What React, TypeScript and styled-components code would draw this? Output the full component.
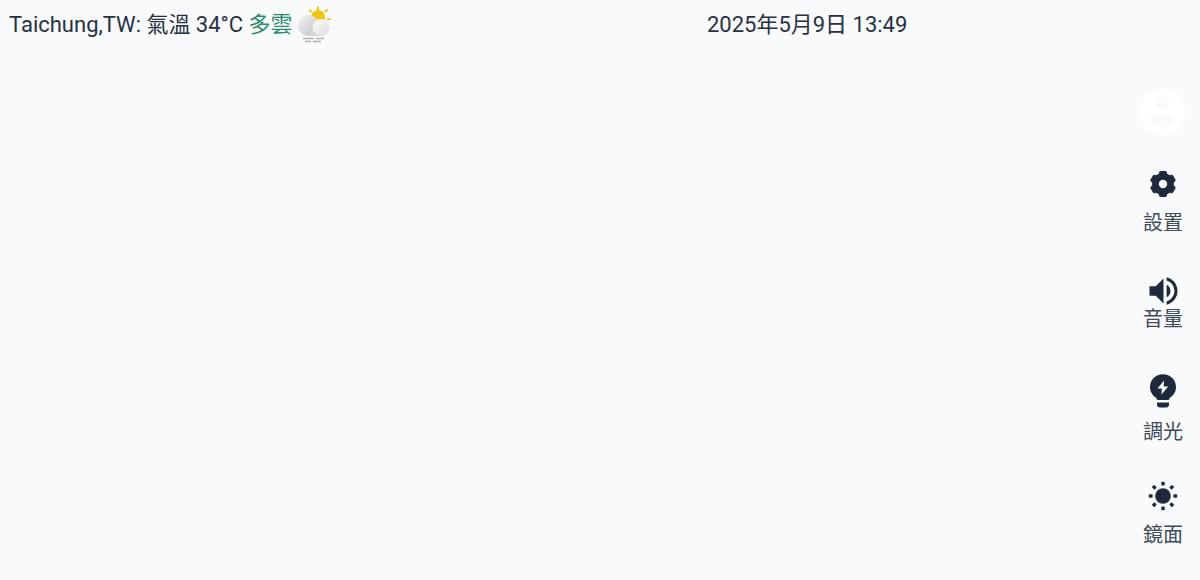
import React from "react";
import styled, { createGlobalStyle } from "styled-components";

const ink = "#1e293b";
const paper = "#f9fafc";

const GlobalStyle = createGlobalStyle`
  *, *::before, *::after { box-sizing: border-box; }
  body {
    margin: 0;
    background: ${paper};
    color: #273142;
    font-family: Roboto, "Noto Sans CJK TC", sans-serif;
    font-weight: 400;
  }
`;

const Page = styled.div`
  display: flex;
  flex-direction: column;
  min-height: 100vh;
`;

const TopBar = styled.header`
  display: grid;
  grid-template-columns: 586fr 414fr;
  align-items: center;
  height: 48px;
  padding: 2px 0 0 9px;
  font-size: 22px;
  line-height: 32px;
  white-space: nowrap;
`;

const Weather = styled.div`
  display: flex;
  align-items: center;
  gap: 2px;
`;

const Condition = styled.span`
  color: #2b8a6c;
`;

const Content = styled.div`
  display: flex;
  flex: 1;
`;

const Main = styled.main`
  flex: 1;
`;

const Sidebar = styled.nav`
  display: flex;
  flex-direction: column;
  align-items: center;
  width: 74px;
  padding-top: 40px;
`;

const IconButton = styled.button<{ $gap?: number; $top?: number }>`
  display: flex;
  flex-direction: column;
  align-items: center;
  gap: ${({ $gap = 12 }) => $gap}px;
  margin-top: ${({ $top = 0 }) => $top}px;
  padding: 0;
  border: 0;
  background: none;
  color: #414b59;
  font: inherit;
  font-size: 20px;
  line-height: 24px;
  cursor: pointer;

  svg {
    display: block;
    fill: ${ink};
  }
`;

const WeatherIcon = () => (
  <svg width="36" height="40" viewBox="0 0 36 40" aria-hidden="true">
    <defs>
      <linearGradient id="cloudBack" x1="0" y1="0" x2="1" y2="1">
        <stop offset="0.1" stopColor="#eeeeef" />
        <stop offset="0.9" stopColor="#c6c7c9" />
      </linearGradient>
      <linearGradient id="cloudFront" x1="0" y1="0" x2="1" y2="1">
        <stop offset="0.1" stopColor="#f8f8f8" />
        <stop offset="1" stopColor="#dcdddf" />
      </linearGradient>
    </defs>
    <path
      d="M23 2v2.500M14.500 5.500l1.500 1.300M32 5l-1.700 1.700M35 14.300h-2.500"
      fill="none"
      stroke="#efc62c"
      strokeWidth="2"
      strokeLinecap="round"
    />
    <circle cx="23" cy="12" r="7" fill="#efc40f" />
    <circle cx="13.500" cy="20.500" r="10.500" fill="url(#cloudBack)" />
    <path d="M13.500 21h13v10h-13z" fill="#d2d3d5" />
    <circle cx="26" cy="22.500" r="8.400" fill="url(#cloudFront)" />
    <g strokeWidth="1.500">
      <path d="M8 33.500h11" stroke="#aab5bd" />
      <path d="M21 33.500h8M10 36.500h6M18 36.500h8" stroke="#b0b1b3" />
    </g>
  </svg>
);

const AvatarIcon = () => (
  <svg width="48" height="48" viewBox="0 0 48 48" aria-hidden="true">
    <circle cx="23" cy="24" r="23" style={{ fill: "#fff" }} />
    <circle cx="23" cy="14.500" r="7" style={{ fill: paper }} />
    <path d="M9 32c5-8 23-8 28 0-6 10-22 10-28 0z" style={{ fill: paper }} />
  </svg>
);

const GearIcon = () => (
  <svg width="26" height="26" viewBox="-13 -13 26 26" aria-hidden="true">
    <circle r="10.900" />
    {[0, 60, 120].map((angle) => (
      <rect key={angle} x="-4" y="-13" width="8" height="26" rx="2" transform={`rotate(${angle})`} />
    ))}
    <circle r="4.200" style={{ fill: paper }} />
  </svg>
);

const VolumeIcon = () => (
  <svg width="29" height="28" viewBox="3 3 18 18" aria-hidden="true">
    <path d="M14 3.230v2.060c2.890.860 5 3.540 5 6.710s-2.110 5.840-5 6.700v2.070c4-.910 7-4.490 7-8.770s-3-7.860-7-8.770zM16.500 12c0-1.770-1-3.290-2.500-4.030V16c1.500-.710 2.500-2.240 2.500-4zM3 9v6h4l5 5V4L7 9H3z" />
  </svg>
);

const BulbIcon = () => (
  <svg width="28" height="34" viewBox="0 0 28 34" aria-hidden="true">
    <path d="M14 0.300C6.500 0.300 1 6 1 13c0 4.800 2.500 8.500 6.500 11v0.500q0 1.500 1.500 1.500h10q1.500 0 1.500-1.500V24c4-2.500 6.500-6.200 6.500-11C27 6 21.500 0.300 14 0.300z" />
    <path d="M8 28.500h12v2q0 3-3 3h-6q-3 0-3-3z" />
    <path d="M15 6.500L8.500 14.500h4.300L12.500 20.500 19.300 12.500h-4.600z" style={{ fill: paper }} />
  </svg>
);

const SunIcon = () => (
  <svg width="30" height="30" viewBox="-15 -15 30 30" aria-hidden="true">
    <circle r="7.800" />
    {[0, 45, 90, 135, 180, 225, 270, 315].map((angle) => (
      <rect key={angle} x="-1.700" y="-14.200" width="3.400" height="3.800" rx="0.800" transform={`rotate(${angle})`} />
    ))}
  </svg>
);

export default function App() {
  return (
    <Page>
      <GlobalStyle />
      <TopBar>
        <Weather>
          <span>
            Taichung,TW: 氣溫 34°C <Condition>多雲</Condition>
          </span>
          <WeatherIcon />
        </Weather>
        <time dateTime="2025-05-09T13:49">2025年5月9日 13:49</time>
      </TopBar>
      <Content>
        <Main />
        <Sidebar>
          <IconButton type="button" aria-label="帳號">
            <AvatarIcon />
          </IconButton>
          <IconButton type="button" $top={35} $gap={14}>
            <GearIcon />
            設置
          </IconButton>
          <IconButton type="button" $top={42} $gap={2}>
            <VolumeIcon />
            音量
          </IconButton>
          <IconButton type="button" $top={43}>
            <BulbIcon />
            調光
          </IconButton>
          <IconButton type="button" $top={37}>
            <SunIcon />
            鏡面
          </IconButton>
        </Sidebar>
      </Content>
    </Page>
  );
}
